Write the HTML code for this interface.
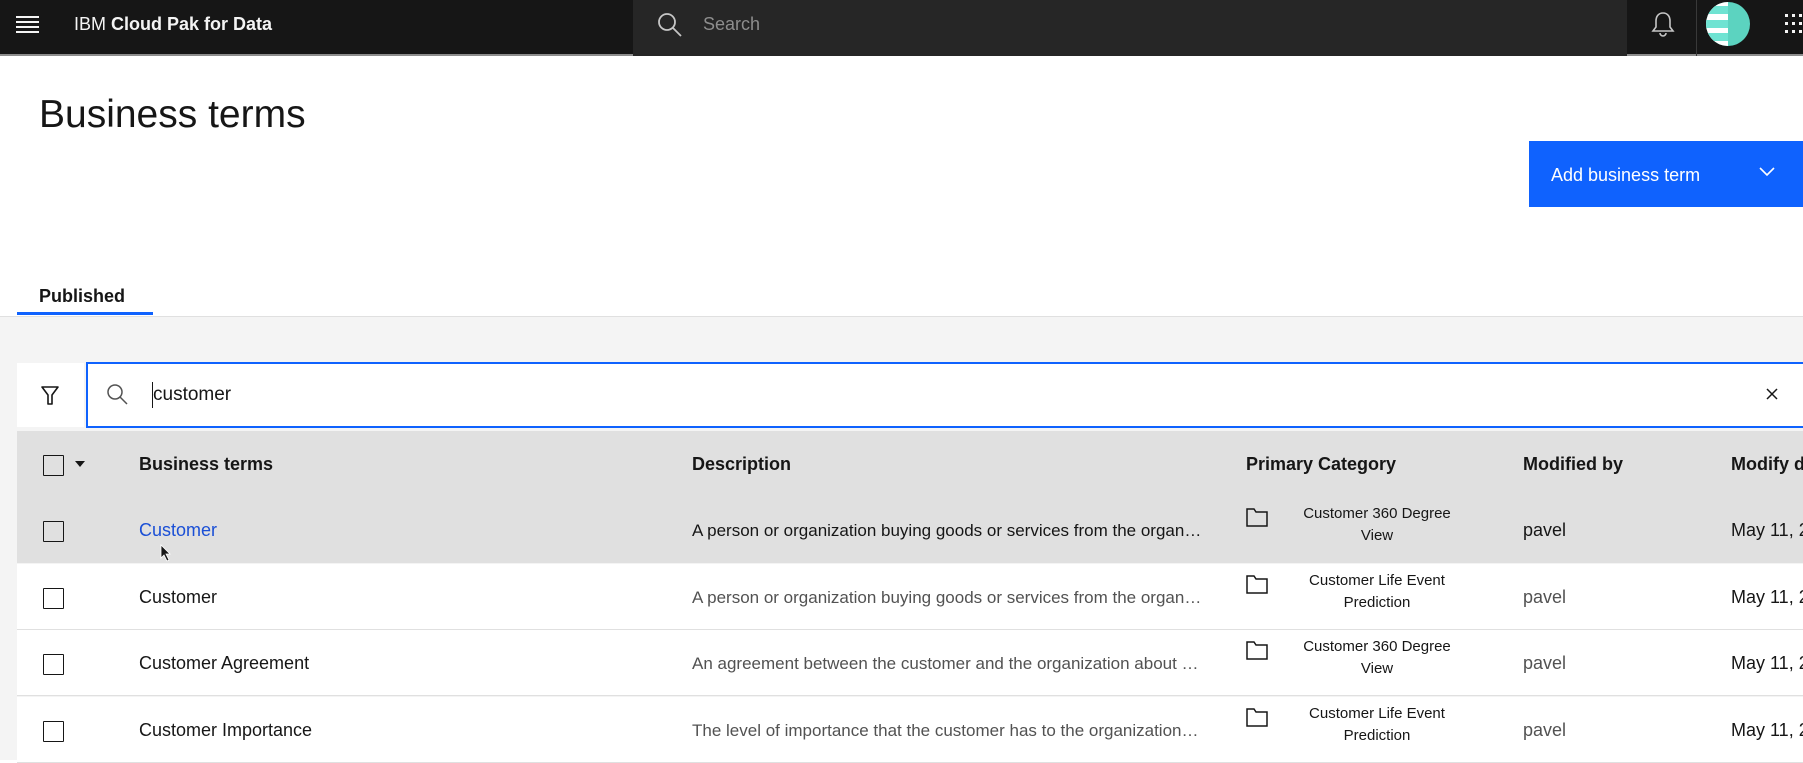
<!DOCTYPE html>
<html><head><meta charset="utf-8"><style>
*{box-sizing:border-box;margin:0;padding:0}
body{width:1803px;height:760px;overflow:hidden;background:#fff;font-family:"Liberation Sans",sans-serif;color:#161616;position:relative}
.abs{position:absolute}
.hdr{left:0;top:0;width:1803px;height:56px;background:#161616;border-bottom:2px solid #8d8d8d}
.row{position:absolute;left:17px;width:1786px;height:66px;border-bottom:1px solid #e0e0e0;background:#fff;font-size:18px}
.row>div{position:absolute}
.cb{left:26px;top:24px;width:21px;height:21px;border:1.5px solid #161616;border-radius:1px}
.c1{left:122px;top:23px}
.c2{left:675px;top:24px;width:510px;white-space:nowrap;overflow:hidden;text-overflow:ellipsis;font-size:17px}
.fold{position:absolute;left:1229px;top:11px}
.cat{left:1280px;top:6px;width:160px;text-align:center;font-size:15px;line-height:22px}
.c4{left:1506px;top:23px}
.c5{left:1714px;top:23px;white-space:nowrap}
.g{color:#525252}
</style></head><body>
<div class="abs hdr"></div>
<svg class="abs" style="left:16px;top:14px" width="24" height="22"><g stroke="#f4f4f4" stroke-width="2"><line x1="0" y1="3" x2="23" y2="3"/><line x1="0" y1="8" x2="23" y2="8"/><line x1="0" y1="13" x2="23" y2="13"/><line x1="0" y1="18" x2="23" y2="18"/></g></svg>
<div class="abs" style="left:74px;top:14px;color:#f4f4f4;font-size:18px">IBM <b>Cloud Pak for Data</b></div>
<div class="abs" style="left:633px;top:0;width:994px;height:56px;background:#262626"></div>
<svg class="abs" style="left:657px;top:12px" width="26" height="26"><circle cx="10" cy="10" r="8" fill="none" stroke="#c6c6c6" stroke-width="1.8"/><line x1="16" y1="16" x2="24" y2="24" stroke="#c6c6c6" stroke-width="1.8"/></svg>
<div class="abs" style="left:703px;top:14px;color:#8d8d8d;font-size:18px">Search</div>
<svg class="abs" style="left:1650px;top:10px" width="26" height="28"><path d="M13 3c-5 0-7 4-7 8v6l-3 4h20l-3-4v-6c0-4-2-8-7-8z" fill="none" stroke="#c6c6c6" stroke-width="1.6"/><path d="M10 23a3 3 0 0 0 6 0" fill="none" stroke="#c6c6c6" stroke-width="1.6"/></svg>
<div class="abs" style="left:1696px;top:0;width:1px;height:56px;background:#393939"></div>
<svg class="abs" style="left:1706px;top:2px" width="46" height="46"><defs><clipPath id="c"><circle cx="22" cy="22" r="22"/></clipPath></defs><g clip-path="url(#c)"><rect width="46" height="46" fill="#5cd3c0"/><rect x="0" y="0" width="22" height="46" fill="#fff"/><rect x="0" y="4" width="22" height="8" fill="#6fe3d2"/><rect x="0" y="18" width="22" height="8" fill="#6fe3d2"/><rect x="0" y="31" width="22" height="8" fill="#6fe3d2"/></g></svg>
<svg class="abs" style="left:1783px;top:13px" width="20" height="22" fill="#f4f4f4"><rect x="2" y="1" width="3" height="3"/><rect x="9" y="1" width="3" height="3"/><rect x="16" y="1" width="3" height="3"/><rect x="2" y="9" width="3" height="3"/><rect x="9" y="9" width="3" height="3"/><rect x="16" y="9" width="3" height="3"/><rect x="2" y="17" width="3" height="3"/><rect x="9" y="17" width="3" height="3"/><rect x="16" y="17" width="3" height="3"/></svg>

<div class="abs" style="left:39px;top:93px;font-size:39px;font-weight:300">Business terms</div>
<div class="abs" style="left:1529px;top:141px;width:274px;height:66px;background:#0f62fe;color:#fff;font-size:18px;padding:24px 0 0 22px">Add business term</div>
<svg class="abs" style="left:1758px;top:166px" width="18" height="12"><path d="M2 2l7 7 7-7" fill="none" stroke="#fff" stroke-width="1.6"/></svg>

<div class="abs" style="left:39px;top:286px;font-size:18px;font-weight:bold">Published</div>
<div class="abs" style="left:0;top:316px;width:1803px;height:444px;background:#f4f4f4;border-top:1px solid #e0e0e0"></div>
<div class="abs" style="left:17px;top:312px;width:136px;height:3px;background:#0f62fe"></div>

<div class="abs" style="left:17px;top:363px;width:67px;height:64px;background:#fff"></div>
<svg class="abs" style="left:40px;top:385px" width="20" height="22"><path d="M2 2h16l-6 8v9h-4v-9z" fill="none" stroke="#161616" stroke-width="1.6" stroke-linejoin="round"/></svg>
<div class="abs" style="left:86px;top:362px;width:1720px;height:66px;background:#fff;border:2px solid #0f62fe"></div>
<svg class="abs" style="left:106px;top:383px" width="24" height="24"><circle cx="9" cy="9" r="7" fill="none" stroke="#525252" stroke-width="1.5"/><line x1="14" y1="14" x2="21" y2="21" stroke="#525252" stroke-width="1.5"/></svg>
<div class="abs" style="left:152px;top:382px;width:1px;height:26px;background:#161616"></div>
<div class="abs" style="left:153px;top:384px;font-size:19px">customer</div>
<svg class="abs" style="left:1765px;top:387px" width="14" height="14"><path d="M2 2l10 10M12 2L2 12" stroke="#161616" stroke-width="1.5"/></svg>

<div class="row" style="top:431px;background:#e0e0e0;font-weight:bold;border:none">
<div class="cb"></div><svg style="position:absolute;left:58px;top:30px" width="10" height="7"><path d="M0 0h10L5 6z" fill="#161616"/></svg>
<div class="c1">Business terms</div><div style="left:675px;top:23px">Description</div><div style="left:1229px;top:23px">Primary Category</div><div class="c4">Modified by</div><div class="c5">Modify d</div></div>

<div class="row" style="top:497px;background:#e0e0e0;border-bottom-color:#e0e0e0">
<div class="cb"></div><div class="c1" style="color:#1a4fd6">Customer</div><div class="c2">A person or organization buying goods or services from the organization</div>
<svg class="fold" width="22" height="19"><path d="M1 1h7l2 3h11v14H1z" fill="none" stroke="#161616" stroke-width="1.5"/></svg>
<div class="cat">Customer 360 Degree<br>View</div><div class="c4">pavel</div><div class="c5">May 11, 2021</div></div>
<svg class="abs" style="left:160px;top:544px" width="12" height="18"><path d="M1 1v13l3-3 3 6 2-1-3-6h4z" fill="#161616" stroke="#fff" stroke-width="0.8"/></svg>

<div class="row" style="top:564px">
<div class="cb"></div><div class="c1">Customer</div><div class="c2 g">A person or organization buying goods or services from the organization</div>
<svg class="fold" width="22" height="19"><path d="M1 1h7l2 3h11v14H1z" fill="none" stroke="#161616" stroke-width="1.5"/></svg>
<div class="cat">Customer Life Event<br>Prediction</div><div class="c4 g">pavel</div><div class="c5">May 11, 2021</div></div>

<div class="row" style="top:630px">
<div class="cb"></div><div class="c1">Customer Agreement</div><div class="c2 g">An agreement between the customer and the organization about products and services</div>
<svg class="fold" width="22" height="19"><path d="M1 1h7l2 3h11v14H1z" fill="none" stroke="#161616" stroke-width="1.5"/></svg>
<div class="cat">Customer 360 Degree<br>View</div><div class="c4 g">pavel</div><div class="c5">May 11, 2021</div></div>

<div class="row" style="top:697px">
<div class="cb"></div><div class="c1">Customer Importance</div><div class="c2 g">The level of importance that the customer has to the organization overall</div>
<svg class="fold" width="22" height="19"><path d="M1 1h7l2 3h11v14H1z" fill="none" stroke="#161616" stroke-width="1.5"/></svg>
<div class="cat">Customer Life Event<br>Prediction</div><div class="c4 g">pavel</div><div class="c5">May 11, 2021</div></div>
</body></html>
